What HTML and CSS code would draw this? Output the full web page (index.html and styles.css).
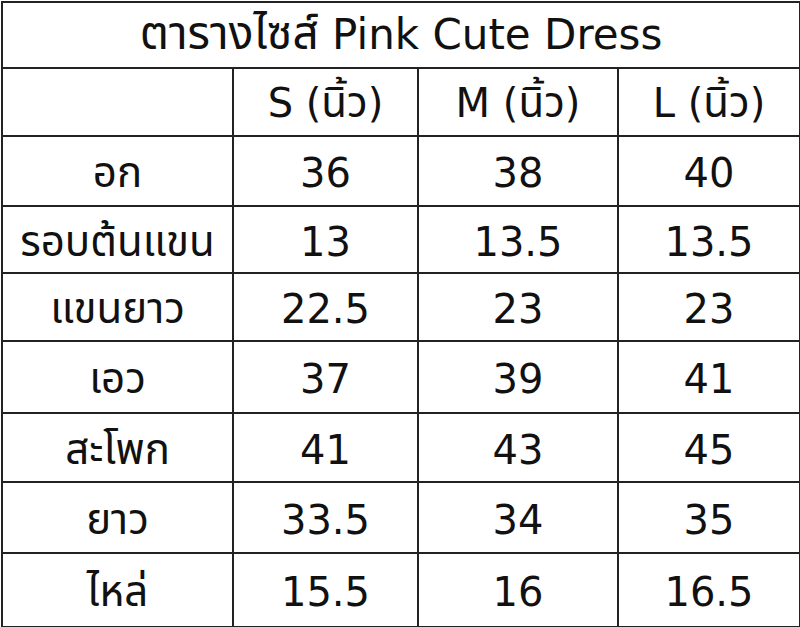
FILE: index.html
```html
<!DOCTYPE html>
<html lang="th">
<head>
<meta charset="utf-8">
<link rel="stylesheet" href="styles.css">
<title>ตารางไซส์ Pink Cute Dress</title>
</head>
<body>
<table class="size-table">
  <colgroup>
    <col class="c-label">
    <col class="c-s">
    <col class="c-m">
    <col class="c-l">
  </colgroup>
  <tr class="r-title"><td class="title" colspan="4"><span class="th">ตารางไซส์</span> Pink Cute Dress</td></tr>
  <tr class="r1"><td class="label"></td><td>S (<span class="th">นิ้ว</span>)</td><td>M (<span class="th">นิ้ว</span>)</td><td>L (<span class="th">นิ้ว</span>)</td></tr>
  <tr class="r2"><td class="label">อก</td><td>36</td><td>38</td><td>40</td></tr>
  <tr class="r3"><td class="label">รอบต้นแขน</td><td>13</td><td>13.5</td><td>13.5</td></tr>
  <tr class="r4"><td class="label">แขนยาว</td><td>22.5</td><td>23</td><td>23</td></tr>
  <tr class="r5"><td class="label">เอว</td><td>37</td><td>39</td><td>41</td></tr>
  <tr class="r6"><td class="label">สะโพก</td><td>41</td><td>43</td><td>45</td></tr>
  <tr class="r7"><td class="label">ยาว</td><td>33.5</td><td>34</td><td>35</td></tr>
  <tr class="r8"><td class="label">ไหล่</td><td>15.5</td><td>16</td><td>16.5</td></tr>
</table>
</body>
</html>
```
FILE: styles.css
```css
html, body {
  margin: 0;
  padding: 0;
  background: #ffffff;
}
.size-table {
  margin: 1px;
  width: 798px;
  height: 625px;
  border-collapse: collapse;
  table-layout: fixed;
  font-family: "DejaVu Sans", "Noto Sans Thai", "Noto Sans", sans-serif;
  color: #111111;
}
.c-label { width: 231px; }
.c-s { width: 185px; }
.c-m { width: 200px; }
.c-l { width: 182px; }
.size-table td {
  border: 2px solid #222222;
  text-align: center;
  vertical-align: middle;
  padding: 4px 0 0 0;
  font-size: 40px;
  line-height: 1;
}
.size-table td.label {
  font-size: 42px;
}
.size-table td.title {
  font-size: 42px;
  padding-top: 0;
}
.th {
  font-family: "Noto Sans Thai", "Noto Sans", sans-serif;
}
.title .th {
  font-size: 46px;
}
.r1 .th {
  font-size: 42px;
}
.r-title { height: 66px; }
.r1 { height: 68px; }
.r2 { height: 70px; }
.r3 { height: 67px; }
.r4 { height: 68px; }
.r5 { height: 72px; }
.r6 { height: 69px; }
.r7 { height: 71px; }
.r8 { height: 74px; }
```
